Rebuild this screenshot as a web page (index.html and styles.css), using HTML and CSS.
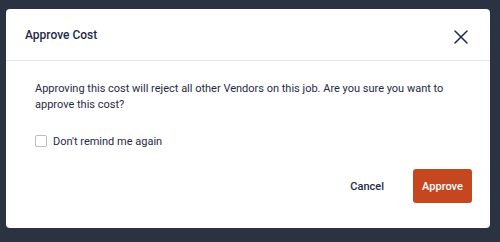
FILE: index.html
```html
<!DOCTYPE html>
<html lang="en">
<head>
<meta charset="utf-8">
<title>Approve Cost</title>
<link rel="stylesheet" href="styles.css">
</head>
<body>
<div class="dialog">
  <div class="dialog-header">
    <h2 class="dialog-title">Approve Cost</h2>
    <button class="close-btn" aria-label="Close">
      <svg width="14" height="14" viewBox="0 0 14 14"><path d="M1 1L13 13M13 1L1 13" stroke="#1f2a44" stroke-width="1.5" fill="none" stroke-linecap="round"/></svg>
    </button>
  </div>
  <div class="dialog-body">
    <p class="message">Approving this cost will reject all other Vendors on this job. Are you sure you want to approve this cost?</p>
    <label class="remind">
      <span class="checkbox"></span>
      <span>Don't remind me again</span>
    </label>
  </div>
  <div class="dialog-footer">
    <button class="btn btn-cancel">Cancel</button>
    <button class="btn btn-approve">Approve</button>
  </div>
</div>
</body>
</html>
```
FILE: styles.css
```css
html, body {
  margin: 0;
  padding: 0;
  background: #2b3242;
  font-family: Roboto, "Liberation Sans", sans-serif;
  color: #1f2a44;
}
body {
  padding: 9px 10px 14px 6px;
}
.dialog {
  width: 484px;
  height: 219px;
  background: #fff;
  border-radius: 4px;
  display: flex;
  flex-direction: column;
  box-sizing: border-box;
}
.dialog-header {
  height: 52px;
  box-sizing: border-box;
  border-bottom: 1px solid #e6e7ea;
  display: flex;
  align-items: center;
  justify-content: space-between;
  padding: 0 22px 0 19px;
}
.dialog-title {
  margin: 0;
  font-size: 12px;
  font-weight: 500;
}
.close-btn {
  border: 0;
  background: none;
  padding: 0;
  margin-top: 4px;
  width: 14px;
  height: 14px;
  display: flex;
}
.dialog-body {
  padding: 20px 29px 0 29px;
}
.message {
  margin: 0;
  font-size: 11px;
  line-height: 16px;
}
.remind {
  display: flex;
  align-items: center;
  gap: 6px;
  margin-top: 20px;
  height: 16px;
  font-size: 11px;
}
.checkbox {
  width: 10px;
  height: 10px;
  border: 1px solid #b9bdc6;
  border-radius: 2px;
}
.dialog-footer {
  margin-top: auto;
  display: flex;
  justify-content: flex-end;
  align-items: center;
  gap: 19px;
  padding: 0 18px 25px 0;
}
.btn {
  font-family: Roboto, "Liberation Sans", sans-serif;
  font-size: 11px;
  font-weight: 500;
  border: 0;
  border-radius: 3px;
  height: 34px;
  padding: 0 10px;
}
.btn-cancel {
  background: none;
  color: #1f2a44;
}
.btn-approve {
  background: #c5471f;
  color: #fff;
  width: 59px;
  padding: 0;
}
```
